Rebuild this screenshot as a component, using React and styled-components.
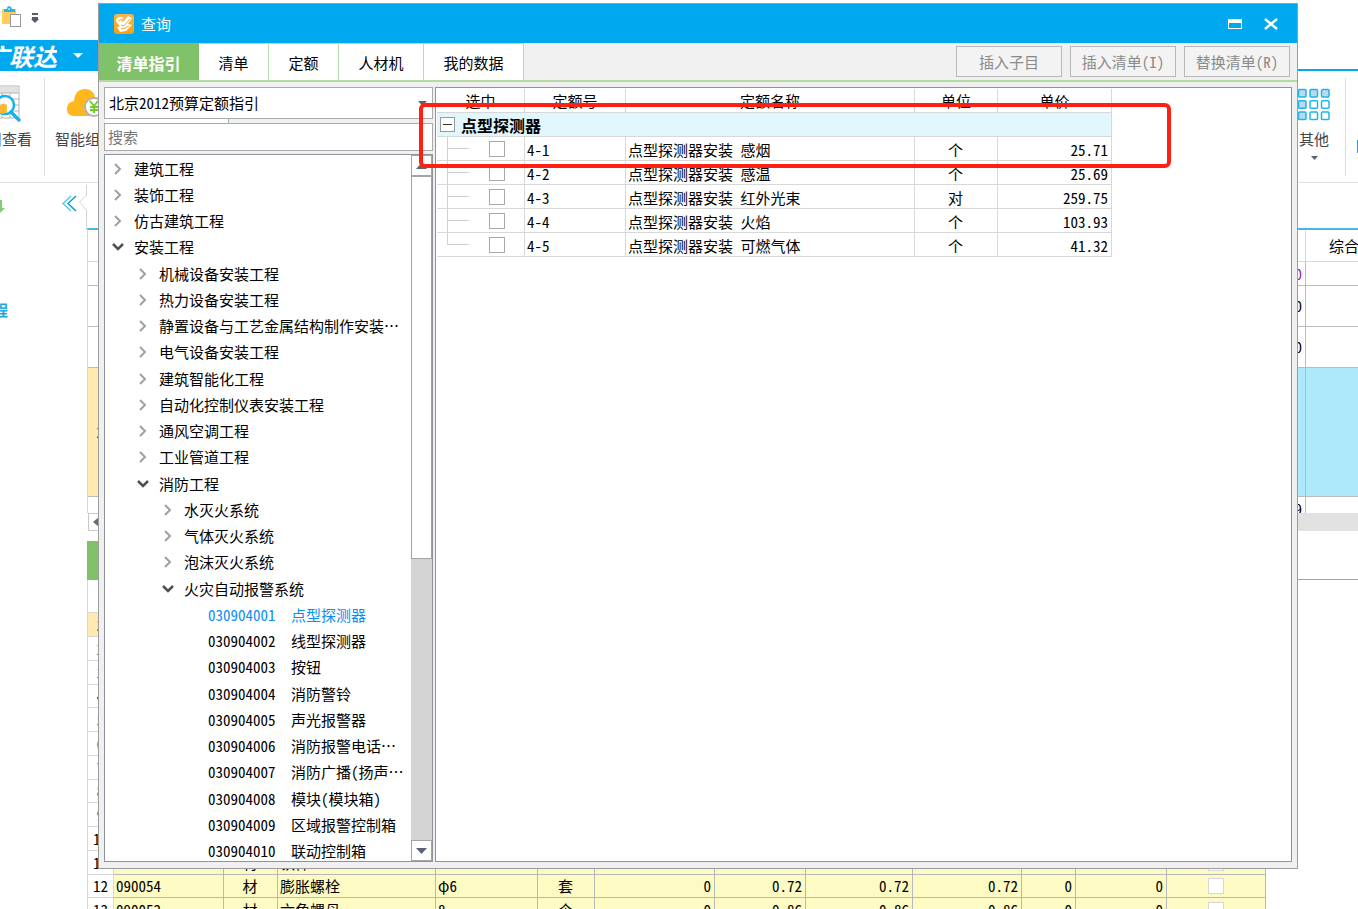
import React from "react";
import styled, { createGlobalStyle, css } from "styled-components";

const BLUE = "#00a8f0";
const GREEN = "#7fc26a";
const LINE = "#d8d8d8";

const Global = createGlobalStyle`
  *, *::before, *::after { box-sizing: border-box; }
  body {
    margin: 0;
    background: #fff;
    color: #000;
    font: 15px/20px "Noto Sans Mono CJK SC", "Noto Sans CJK SC", "Liberation Sans", sans-serif;
  }
  button, input, select { font: inherit; color: inherit; margin: 0; }
  button { border: 0; background: none; padding: 0; }
  table { border-collapse: separate; border-spacing: 0; table-layout: fixed; }
  th, td { padding: 0; font-weight: 400; white-space: nowrap; overflow: hidden; }
  ul { list-style: none; margin: 0; padding: 0; }
`;

/* ---------- main program window ---------- */

const Stage = styled.div`
  position: relative;
  height: 100vh;
  overflow: hidden;
  display: flex;
  flex-direction: column;
`;

const QuickBar = styled.div`
  flex: none;
  height: 40px;
  display: flex;
  align-items: flex-start;
  gap: 8px;
  padding-top: 5px;
`;

const BrandRow = styled.div`
  flex: none;
  height: 31px;
  display: flex;
  border-bottom: 2px solid ${BLUE};
`;

const Brand = styled.button`
  width: 120px;
  height: 31px;
  display: flex;
  align-items: center;
  gap: 16px;
  background: ${BLUE};
  color: #fff;
  font-size: 24px;
  line-height: 31px;
  font-weight: 700;
  font-style: italic;
`;

const ClipEnd = styled.span`
  width: ${(p) => p.$width}px;
  flex: none;
  overflow: hidden;
  display: flex;
  justify-content: flex-end;
  white-space: nowrap;
`;

const Ribbon = styled.div`
  flex: none;
  height: 112px;
  display: flex;
  border-bottom: 1px solid #e2e2e2;
  color: #444;
`;

const RibbonItem = styled.button`
  width: ${(p) => p.$width}px;
  display: flex;
  flex-direction: column;
  align-items: ${(p) => p.$align || "center"};
  padding-top: 14px;
  gap: 7px;
`;

const RibbonLine = styled.span`
  width: 1px;
  height: 98px;
  margin-top: 7px;
  background: #dedede;
`;

const Spacer = styled.span`
  flex: 1;
`;

const Edge = styled.span`
  width: 12px;
  display: flex;
  justify-content: flex-end;
  align-items: flex-start;
  padding-top: 69px;
`;

const Work = styled.div`
  flex: 1;
  min-height: 0;
  display: flex;
`;

const Side = styled.aside`
  width: 87px;
  flex: none;
`;

const SideTop = styled.div`
  height: 47px;
  display: flex;
  align-items: flex-start;
  justify-content: space-between;
`;

const SideTool = styled.button`
  display: flex;
  padding-top: 12px;
`;

const SideTools = styled(SideTool)`
  margin-left: auto;
  margin-right: 2px;
`;

const SideNode = styled.a`
  display: flex;
  margin-top: 70px;
  color: #1ea7dc;
  font-weight: 700;
  text-decoration: none;
`;

const Main = styled.main`
  flex: 1;
  min-width: 0;
  padding-top: 45px;
`;

const Upper = styled.div`
  height: 285px;
  overflow: hidden;
  border-top: 2px solid #45b6e6;
  border-left: 1px solid ${LINE};
`;

const UpperTable = styled.table`
  width: 100%;
`;

const UpperCell = styled.td`
  height: ${(p) => p.$h}px;
  border-right: 1px solid #bbb;
  border-bottom: 1px solid #bbb;
  padding: 0 3px;
  text-align: ${(p) => p.$align || "right"};
  background: ${(p) => p.$bg || "#fff"};
  color: ${(p) => p.$color || "#000"};
  font-weight: ${(p) => (p.$bold ? 700 : 400)};
  &:last-child {
    border-right: 0;
  }
`;

const UpperHead = styled.th`
  height: 32px;
  border-right: 1px solid ${LINE};
  border-bottom: 1px solid ${LINE};
  padding-left: 23px;
  text-align: left;
  &:last-child {
    border-right: 0;
  }
`;

const HScroll = styled.div`
  height: 18px;
  display: flex;
  margin-left: 1px;
  background: #e1e1e1;
`;

const HArrow = styled.button`
  width: 20px;
  display: flex;
  align-items: center;
  justify-content: flex-start;
  padding-left: 4px;
  border: 1px solid #c8c8c8;
  background: #fff;
`;

const LowerTabs = styled.div`
  height: 49px;
  padding-top: 10px;
  border-bottom: 1px solid ${GREEN};
`;

const LowerTab = styled.button`
  display: block;
  width: 100px;
  height: 38px;
  background: ${GREEN};
`;

const LowerTable = styled.table`
  width: 1179px;
  border-left: 1px solid ${LINE};
`;

const LowerHead = styled.th`
  height: 33px;
  border-bottom: 1px solid ${LINE};
`;

const LowerRow = styled.tr`
  height: 24px;
  &:nth-child(4n) {
    height: 23px;
  }
`;

const LowerCell = styled.td`
  border-right: 1px solid #b8b8b8;
  border-bottom: 1px solid #b8b8b8;
  padding: 0 3px 0 2px;
  line-height: 20px;
  background: #fdfac4;
  text-align: ${(p) => p.$align || "left"};
`;

const Gutter = styled(LowerCell)`
  border-color: ${LINE};
  padding: 0;
  text-align: center;
  background: ${(p) => (p.$on ? "#ffebb0" : "#fff")};
  font-weight: ${(p) => (p.$on ? 700 : 400)};
`;

const Check = styled.input`
  appearance: none;
  display: block;
  width: 16px;
  height: 16px;
  border: 1px solid ${(p) => (p.$faint ? "#d8d8d8" : "#a8a8a8")};
  background: #fff;
  margin: ${(p) => (p.$faint ? "0 auto" : "0")};
`;

/* ---------- query dialog ---------- */

const Dialog = styled.section`
  position: absolute;
  top: 3px;
  left: 98px;
  right: 60px;
  bottom: 40px;
  display: flex;
  flex-direction: column;
  border: 1px solid #9c9c9c;
  background: #f0f0f0;
`;

const TitleBar = styled.header`
  flex: none;
  height: 39px;
  display: flex;
  align-items: center;
  padding: 0 19px 0 15px;
  background: ${BLUE};
  color: #fff;
`;

const Title = styled.h1`
  flex: 1;
  margin: 0 0 0 7px;
  font-size: 15px;
  line-height: 20px;
  font-weight: 400;
`;

const WinButton = styled.button`
  display: flex;
  margin-left: 22px;
`;

const TabBar = styled.nav`
  flex: none;
  height: 39px;
  display: flex;
  border-bottom: 2px solid #b2daa2;
`;

const Tab = styled.button`
  width: ${(p) => p.$width}px;
  padding-top: 2px;
  background: #fff;
  border-right: 1px solid #b8e0a8;
  border-top: 1px solid #b8e0a8;
  ${(p) =>
    p.$active &&
    css`
      background: ${GREEN};
      border-color: ${GREEN};
      color: #fff;
      font-size: 16px;
      font-weight: 700;
    `}
`;

const Actions = styled.div`
  margin-left: auto;
  display: flex;
  gap: 8px;
  padding: 3px 7px 3px 0;
`;

const Action = styled.button`
  width: 106px;
  border: 1px solid #b8b8b8;
  background: #f3f3f3;
  color: #8a8a8a;
`;

const Body = styled.div`
  position: relative;
  flex: 1;
  min-height: 0;
  display: flex;
  gap: 2px;
  padding: 5px 5px 6px;
`;

const LeftPane = styled.div`
  width: 329px;
  flex: none;
  display: flex;
  flex-direction: column;
`;

const SelectBox = styled.div`
  flex: none;
  height: 32px;
  display: flex;
  align-items: center;
  border: 1px solid #aaa;
  background: #fff;
  padding-right: 5px;
`;

const Select = styled.select`
  appearance: none;
  flex: 1;
  height: 30px;
  border: 0;
  padding: 0 4px;
  background: transparent;
`;

const Splitter = styled.div`
  flex: none;
  height: 4px;
  margin-left: 1px;
  &::before {
    content: "";
    display: block;
    width: 124px;
    height: 4px;
    background: #fff;
    border-right: 1px solid #8cb4c4;
  }
`;

const Search = styled.input`
  flex: none;
  width: 100%;
  height: 28px;
  border: 1px solid #aaa;
  padding: 0 3px 2px;
  background: #fff;
  &::placeholder {
    color: #777;
    opacity: 1;
  }
`;

const TreeBox = styled.div`
  flex: 1;
  min-height: 0;
  margin-top: 3px;
  display: flex;
  border: 1px solid #8f939b;
  background: #fff;
`;

const Tree = styled.ul`
  flex: 1;
  overflow: hidden;
  padding-top: 1px;
`;

const TreeItem = styled.li`
  height: 26px;
  &:nth-child(4n) {
    height: 27px;
  }
`;

const TreeButton = styled.button`
  height: 26px;
  display: flex;
  align-items: center;
  gap: 10px;
  padding-left: ${(p) => 7 + p.$level * 25}px;
  white-space: nowrap;
`;

const LeafButton = styled.button`
  height: 26px;
  display: grid;
  grid-template-columns: 83px auto;
  align-items: center;
  padding-left: 103px;
  text-align: left;
  white-space: nowrap;
  color: ${(p) => (p.$active ? "#0a8ff0" : "inherit")};
`;

const VScroll = styled.div`
  width: 21px;
  flex: none;
  display: flex;
  flex-direction: column;
  background: #d4d4d4;
`;

const VButton = styled.button`
  flex: none;
  height: 21px;
  display: flex;
  align-items: center;
  justify-content: center;
  background: #fff;
  border: 1px solid #a4a4a4;
`;

const VThumb = styled.div`
  height: 383px;
  background: #fff;
  border: 1px solid #a4a4a4;
  margin-bottom: auto;
`;

const RightPane = styled.div`
  flex: 1;
  min-width: 0;
  border: 1px solid #8f939b;
  padding: 1px;
  background: #fff;
`;

const Quota = styled.table`
  width: 675px;
`;

const cell = css`
  height: 24px;
  border-right: 1px solid ${LINE};
  border-bottom: 1px solid ${LINE};
`;

const QuotaHead = styled.th`
  ${cell}
`;

const QuotaCell = styled.td`
  ${cell}
  padding: 2px 3px 0 2px;
  text-align: ${(p) => p.$align || "left"};
`;

const GroupCell = styled.td`
  ${cell}
  background: #e2f6fe;
`;

const GroupInner = styled.div`
  height: 23px;
  display: flex;
  align-items: center;
  gap: 6px;
  padding-left: 3px;
  font-size: 16px;
  font-weight: 700;
`;

const Toggle = styled.button`
  width: 15px;
  height: 15px;
  display: flex;
  align-items: center;
  justify-content: center;
  border: 1px solid #999;
  background: #fff;
`;

const PickCell = styled.td`
  ${cell}
`;

const PickInner = styled.div`
  height: 23px;
  display: flex;
  align-items: center;
  padding-left: 10px;
  gap: 20px;
`;

const Marker = styled.div`
  position: absolute;
  top: 21px;
  left: 320px;
  width: 752px;
  height: 65px;
  border: 4px solid #ff2012;
  border-radius: 6px;
  pointer-events: none;
`;

/* ---------- drawings ---------- */

const Caret = ({ w = 9, h = 5, up, color = "#5c6474" }) => (
  <svg width={w} height={h} viewBox="0 0 10 6" preserveAspectRatio="none">
    <path d={up ? "M0 6L5 0L10 6Z" : "M0 0H10L5 6Z"} fill={color} />
  </svg>
);

const Chevron = ({ open }) => (
  <svg width="12" height="16" viewBox="0 0 12 16" fill="none" strokeWidth="2">
    {open ? (
      <path d="M1 5L6 10L11 5" stroke="#505050" strokeWidth="2.500" />
    ) : (
      <path d="M3 3L8 8L3 13" stroke="#a0a0a0" />
    )}
  </svg>
);

const PasteIcon = () => (
  <svg width="23" height="23" viewBox="0 0 23 23">
    <rect x="2" y="4" width="14" height="15" rx="1" fill="#ffcd58" />
    <path d="M4 7V4H7Q7 1 9 1T12 4H15V7Z" fill="#25b6df" />
    <path d="M8 4H10" stroke="#fff" />
    <rect x="10.500" y="9.500" width="10" height="12" fill="#fff" stroke="#999" />
  </svg>
);

const MoreIcon = () => (
  <svg width="8" height="19" viewBox="0 0 8 19">
    <path d="M1 8H7V10H1ZM1 12H7V14H8L4 18L0 14H1Z" fill="#555b6c" />
  </svg>
);

const SheetSearchIcon = () => (
  <svg width="21" height="37" viewBox="0 0 21 37">
    <path d="M0 1H19V33H0" fill="#fff" stroke="#b4b4b4" />
    <path d="M0 2H18V8H0Z" fill="#e2e2e2" />
    <path d="M0 8H19M0 14H19M0 20H19M0 26H19M10 8V33M2 8V33" stroke="#b4b4b4" />
    <circle cx="5" cy="20" r="9" fill="#fff" stroke="#15b4e8" strokeWidth="2.500" />
    <path d="M0 20Q3 17 7 20V27Q3 30 0 28Z" fill="#ffb936" />
    <path d="M11 27L19 35" stroke="#15b4e8" strokeWidth="3.500" strokeLinecap="round" />
  </svg>
);

const CloudIcon = () => (
  <svg width="38" height="37" viewBox="0 0 38 37">
    <path d="M8 31Q1 31 1 24T8 16Q9 4 19 4Q27 4 29 12Q37 12 37 22T31 31Z" fill="#ffb71e" />
    <circle cx="28" cy="22" r="9" fill="#fff" stroke="#b4b4b4" strokeWidth="2" />
    <path d="M24 16L28 21L32 16M28 21V28M24 22H32M24 25H32" fill="none" stroke="#74cc28" strokeWidth="2" />
  </svg>
);

const GridIcon = () => (
  <svg width="34" height="37" viewBox="0 0 34 37">
    {[0, 1, 2].map((r) =>
      [0, 1, 2].map((c) => (
        <rect
          key={`${r}-${c}`}
          x={1.5 + c * 11.5}
          y={4.5 + r * 11.3}
          width="7.500"
          height="7.500"
          rx="1"
          fill={r === 0 || c === 0 ? "#bdd9ee" : "#fff"}
          stroke="#1cb7ea"
          strokeWidth="1.500"
        />
      ))
    )}
  </svg>
);

const CollapseIcon = () => (
  <svg width="15" height="17" viewBox="0 0 15 17" fill="none" strokeWidth="1.500">
    <path d="M9 1L1 8.500L9 16" stroke="#5bc8e4" />
    <path d="M14 1L6 8.500L14 16" stroke="#159dc8" />
  </svg>
);

const Notch = () => (
  <svg width="8" height="47" viewBox="0 0 8 47" fill="none">
    <path d="M7.500 2V12L0.500 19L7.500 27V47" stroke="#d4d4d4" />
  </svg>
);

const DownArrow = () => (
  <svg width="5" height="18" viewBox="0 0 5 18">
    <path d="M0 5V18L5 13H2V5Z" fill="#7bd26c" />
  </svg>
);

const AppIcon = () => (
  <svg width="20" height="20" viewBox="0 0 20 20">
    <defs>
      <linearGradient id="app" x1="0" y1="0" x2="0" y2="1">
        <stop offset="0" stopColor="#f7b64c" />
        <stop offset="1" stopColor="#ff9e08" />
      </linearGradient>
    </defs>
    <rect width="20" height="20" rx="3" fill="url(#app)" />
    <path d="M2 6Q4 2 8 3L10 4L7 7L9 8L14 2L18 4L14 10L18 11L12 17L6 18L3 13L6 12L3 9Z" fill="#fff" />
    <path d="M4 7L8 5M7 11L10 12L16 5M7 15L11 14L15 12" fill="none" stroke="#f6a832" />
  </svg>
);

/* ---------- data ---------- */

const upperRows = [
  { h: 24, value: "0", color: "#a010a0" },
  { h: 41, value: "0" },
  { h: 41, value: "0" },
  { h: 129, no: "2", value: "", on: true },
  { h: 24, value: "9" },
];

const lowerWidths = [26, 110, 54, 158, 102, 57, 120, 91, 107, 109, 54, 91, 99];
const lowerAligns = ["left", "center", "left", "left", "center", "right", "right", "right", "right", "right", "right"];
const lowerRows = {
  11: ["", "材", "铁件"],
  12: ["090054", "材", "膨胀螺栓", "φ6", "套", "0", "0.72", "0.72", "0.72", "0", "0"],
  13: ["090052", "材", "六角螺母", "8", "个", "0", "0.86", "0.86", "0.86", "0", "0"],
};

const tabs = [
  ["清单指引", 100],
  ["清单", 70],
  ["定额", 70],
  ["人材机", 85],
  ["我的数据", 100],
];

const nodes = [
  [0, "建筑工程"],
  [0, "装饰工程"],
  [0, "仿古建筑工程"],
  [0, "安装工程", true],
  [1, "机械设备安装工程"],
  [1, "热力设备安装工程"],
  [1, "静置设备与工艺金属结构制作安装…"],
  [1, "电气设备安装工程"],
  [1, "建筑智能化工程"],
  [1, "自动化控制仪表安装工程"],
  [1, "通风空调工程"],
  [1, "工业管道工程"],
  [1, "消防工程", true],
  [2, "水灭火系统"],
  [2, "气体灭火系统"],
  [2, "泡沫灭火系统"],
  [2, "火灾自动报警系统", true],
];

const leaves = [
  ["030904001", "点型探测器"],
  ["030904002", "线型探测器"],
  ["030904003", "按钮"],
  ["030904004", "消防警铃"],
  ["030904005", "声光报警器"],
  ["030904006", "消防报警电话…"],
  ["030904007", "消防广播(扬声…"],
  ["030904008", "模块(模块箱)"],
  ["030904009", "区域报警控制箱"],
  ["030904010", "联动控制箱"],
];

const quotas = [
  ["4-1", "点型探测器安装 感烟", "个", "25.71"],
  ["4-2", "点型探测器安装 感温", "个", "25.69"],
  ["4-3", "点型探测器安装 红外光束", "对", "259.75"],
  ["4-4", "点型探测器安装 火焰", "个", "103.93"],
  ["4-5", "点型探测器安装 可燃气体", "个", "41.32"],
];

/* ---------- assembly ---------- */

const Workbench = () => (
  <>
    <QuickBar>
      <PasteIcon />
      <MoreIcon />
    </QuickBar>
    <BrandRow>
      <Brand type="button">
        <ClipEnd $width={57}>广联达</ClipEnd>
        <Caret w={10} h={5} color="#fff" />
      </Brand>
    </BrandRow>
    <Ribbon>
      <RibbonItem type="button" $width={44} $align="flex-start">
        <SheetSearchIcon />
        <ClipEnd $width={32}>用查看</ClipEnd>
      </RibbonItem>
      <RibbonLine />
      <RibbonItem type="button" $width={80}>
        <CloudIcon />
        智能组价
      </RibbonItem>
      <Spacer />
      <RibbonItem type="button" $width={62}>
        <GridIcon />
        其他
        <Caret w={7} h={4} />
      </RibbonItem>
      <RibbonLine />
      <Edge>
        <svg width="1" height="13">
          <rect width="1" height="13" fill={BLUE} />
        </svg>
      </Edge>
    </Ribbon>
    <Work>
      <Side>
        <SideTop>
          <SideTool type="button" aria-label="下移">
            <DownArrow />
          </SideTool>
          <SideTools type="button" aria-label="收起">
            <CollapseIcon />
          </SideTools>
          <Notch />
        </SideTop>
        <SideNode href="#project">
          <ClipEnd $width={8}>工程</ClipEnd>
        </SideNode>
      </Side>
      <Main>
        <Upper>
          <UpperTable>
            <colgroup>
              <col style={{ width: 26 }} />
              <col />
              <col style={{ width: 52 }} />
            </colgroup>
            <thead>
              <tr>
                <UpperHead />
                <UpperHead />
                <UpperHead>综合单价</UpperHead>
              </tr>
            </thead>
            <tbody>
              {upperRows.map((r, i) => (
                <tr key={i}>
                  <UpperCell $h={r.h} $align="center" $bold $bg={r.on && "#ffebb0"}>
                    {r.no}
                  </UpperCell>
                  <UpperCell $h={r.h} $color={r.color} $bg={r.on && "#aee9fb"}>
                    {r.value}
                  </UpperCell>
                  <UpperCell $h={r.h} $bg={r.on && "#aee9fb"} />
                </tr>
              ))}
            </tbody>
          </UpperTable>
        </Upper>
        <HScroll>
          <HArrow type="button" aria-label="向左">
            <svg width="6" height="10" viewBox="0 0 6 10">
              <path d="M6 0V10L0 5Z" fill="#666c78" />
            </svg>
          </HArrow>
        </HScroll>
        <LowerTabs>
          <LowerTab type="button" aria-label="工料机显示" />
        </LowerTabs>
        <LowerTable>
          <colgroup>
            {lowerWidths.map((w, i) => (
              <col key={i} style={{ width: w }} />
            ))}
          </colgroup>
          <thead>
            <tr>
              <LowerHead colSpan={13} />
            </tr>
          </thead>
          <tbody>
            {Array.from({ length: 13 }, (_, i) => i + 1).map((n) => (
              <LowerRow key={n}>
                <Gutter $on={n === 1}>{n}</Gutter>
                {lowerAligns.map((a, c) => (
                  <LowerCell key={c} $align={a}>
                    {lowerRows[n] ? lowerRows[n][c] : ""}
                  </LowerCell>
                ))}
                <LowerCell>
                  <Check type="checkbox" $faint aria-label={`第${n}行`} />
                </LowerCell>
              </LowerRow>
            ))}
          </tbody>
        </LowerTable>
      </Main>
    </Work>
  </>
);

const GuideTree = () => (
  <TreeBox>
    <Tree>
      {nodes.map(([level, name, open]) => (
        <TreeItem key={name}>
          <TreeButton type="button" $level={level} aria-expanded={!!open}>
            <Chevron open={open} />
            {name}
          </TreeButton>
        </TreeItem>
      ))}
      {leaves.map(([code, name], i) => (
        <TreeItem key={code}>
          <LeafButton type="button" $active={i === 0}>
            <span>{code}</span>
            <span>{name}</span>
          </LeafButton>
        </TreeItem>
      ))}
    </Tree>
    <VScroll>
      <VButton type="button" aria-label="向上">
        <Caret w={11} h={6} up />
      </VButton>
      <VThumb />
      <VButton type="button" aria-label="向下">
        <Caret w={11} h={6} />
      </VButton>
    </VScroll>
  </TreeBox>
);

const QuotaTable = () => (
  <Quota>
    <colgroup>
      {[88, 101, 289, 83, 114].map((w, i) => (
        <col key={i} style={{ width: w }} />
      ))}
    </colgroup>
    <thead>
      <tr>
        {["选中", "定额号", "定额名称", "单位", "单价"].map((h) => (
          <QuotaHead key={h}>{h}</QuotaHead>
        ))}
      </tr>
    </thead>
    <tbody>
      <tr>
        <GroupCell colSpan={5}>
          <GroupInner>
            <Toggle type="button" aria-label="折叠">
              <svg width="9" height="1">
                <rect width="9" height="1" fill="#333" />
              </svg>
            </Toggle>
            点型探测器
          </GroupInner>
        </GroupCell>
      </tr>
      {quotas.map(([code, name, unit, price], i) => (
        <tr key={code}>
          <PickCell>
            <PickInner>
              <svg width="22" height="23" viewBox="0 0 22 23">
                <path
                  d={`M0.500 0V${i === quotas.length - 1 ? 11.5 : 23}M0 11.500H22`}
                  fill="none"
                  stroke="#d0d0d0"
                />
              </svg>
              <Check type="checkbox" aria-label={name} />
            </PickInner>
          </PickCell>
          <QuotaCell>{code}</QuotaCell>
          <QuotaCell>{name}</QuotaCell>
          <QuotaCell $align="center">{unit}</QuotaCell>
          <QuotaCell $align="right">{price}</QuotaCell>
        </tr>
      ))}
    </tbody>
  </Quota>
);

export default function App() {
  return (
    <Stage lang="zh-CN">
      <Global />
      <Workbench />
      <Dialog role="dialog" aria-labelledby="query-title">
        <TitleBar>
          <AppIcon />
          <Title id="query-title">查询</Title>
          <WinButton type="button" aria-label="最大化">
            <svg width="14" height="10" viewBox="0 0 14 10">
              <path d="M0 0H14V10H0ZM1 4V9H13V4Z" fill="#fff" fillRule="evenodd" />
            </svg>
          </WinButton>
          <WinButton type="button" aria-label="关闭">
            <svg width="14" height="12" viewBox="0 0 14 12">
              <path d="M1 1L13 11M13 1L1 11" stroke="#fff" strokeWidth="2.500" />
            </svg>
          </WinButton>
        </TitleBar>
        <TabBar>
          {tabs.map(([name, width], i) => (
            <Tab key={name} type="button" $width={width} $active={i === 0}>
              {name}
            </Tab>
          ))}
          <Actions>
            {["插入子目", "插入清单(I)", "替换清单(R)"].map((name) => (
              <Action key={name} type="button">
                {name}
              </Action>
            ))}
          </Actions>
        </TabBar>
        <Body>
          <LeftPane>
            <SelectBox>
              <Select aria-label="指引库" defaultValue="bj">
                <option value="bj">北京2012预算定额指引</option>
              </Select>
              <Caret w={9} h={5} />
            </SelectBox>
            <Splitter />
            <Search type="text" placeholder="搜索" aria-label="搜索" />
            <GuideTree />
          </LeftPane>
          <RightPane>
            <QuotaTable />
          </RightPane>
          <Marker />
        </Body>
      </Dialog>
    </Stage>
  );
}
